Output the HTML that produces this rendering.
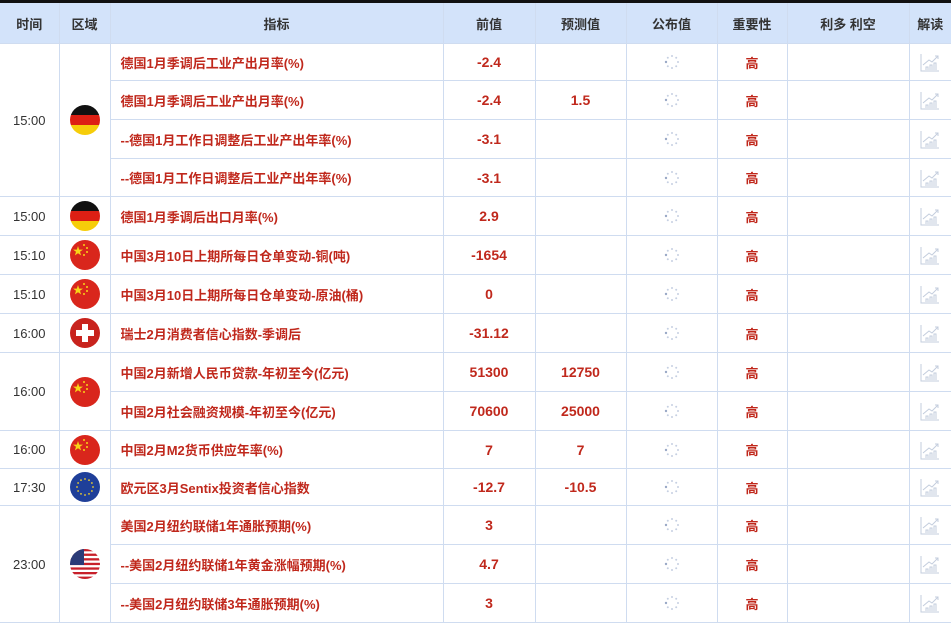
<!DOCTYPE html>
<html><head><meta charset="utf-8"><style>
body{margin:0;width:951px;height:624px;overflow:hidden;background:#fff;font-family:"Liberation Sans","Noto Sans CJK SC",sans-serif;}
.top{height:3px;background:#111;}
table{border-collapse:collapse;table-layout:fixed;width:951px;}
td,th{border:1px solid #cfdcf0;padding:0;text-align:center;font-size:13px;}
th{background:#d3e3fa;color:#333;font-weight:bold;height:40px;}
tr:first-child th{border-top:none}
td.t{color:#333;font-size:13px;}
td.n{color:#c0281c;font-weight:bold;text-align:left;padding-left:10px;}
td.v{color:#c0281c;font-weight:bold;font-size:14px;}
td.h{color:#c0281c;font-weight:bold;}
td:first-child,th:first-child{border-left:none}
td:last-child,th:last-child{border-right:none}
svg{display:block;margin:0 auto;}
</style></head><body>
<div class="top"></div>
<svg width="0" height="0" style="position:absolute">
<defs>
<g id="sp" fill="#c6d0e2"><circle cx="8" cy="2" r="1"/><circle cx="12.2" cy="3.8" r="1"/><circle cx="14" cy="8" r="1"/><circle cx="12.2" cy="12.2" r="1"/><circle cx="8" cy="14" r="1"/><circle cx="3.8" cy="12.2" r="1"/><circle cx="2" cy="8" r="1.2" fill="#9aa9c6"/><circle cx="3.8" cy="3.8" r="1"/></g>
<g id="ch" fill="none" stroke="#c3cddd" stroke-width="1"><path d="M2 3V20H20"/><path d="M4 14L10 9L13 11L19 5M16 5H19V8"/><path d="M7 19V16H9V19M11 19V14H13V19M15 19V12H17V19"/></g>
<clipPath id="cc"><circle cx="15" cy="15" r="15"/></clipPath>
<g id="de" clip-path="url(#cc)"><rect width="30" height="10" fill="#111"/><rect y="10" width="30" height="10" fill="#dd1f14"/><rect y="20" width="30" height="10" fill="#f6cd0a"/></g>
<g id="cn"><circle cx="15" cy="15" r="15" fill="#d9261c"/><polygon points="8,6 9.2,9.6 13,9.6 10,11.8 11.1,15.4 8,13.2 4.9,15.4 6,11.8 3,9.6 6.8,9.6" fill="#f8d517"/><g fill="#f8d517"><circle cx="14" cy="5" r="1"/><circle cx="17" cy="8" r="1"/><circle cx="17" cy="12" r="1"/><circle cx="14" cy="15" r="1"/></g></g>
<g id="ch2"><circle cx="15" cy="15" r="15" fill="#c8231d"/><path d="M12 6H18V12H24V18H18V24H12V18H6V12H12Z" fill="#fff"/></g>
<g id="eu"><circle cx="15" cy="15" r="15" fill="#1f3f99"/><g fill="#f3d12b"><circle cx="15" cy="7" r="0.9"/><circle cx="19" cy="8.1" r="0.9"/><circle cx="21.9" cy="11" r="0.9"/><circle cx="23" cy="15" r="0.9"/><circle cx="21.9" cy="19" r="0.9"/><circle cx="19" cy="21.9" r="0.9"/><circle cx="15" cy="23" r="0.9"/><circle cx="11" cy="21.9" r="0.9"/><circle cx="8.1" cy="19" r="0.9"/><circle cx="7" cy="15" r="0.9"/><circle cx="8.1" cy="11" r="0.9"/><circle cx="11" cy="8.1" r="0.9"/></g></g>
<g id="us" clip-path="url(#cc)"><rect width="30" height="30" fill="#fff"/><g fill="#c8202a"><rect y="0" width="30" height="2.3"/><rect y="4.6" width="30" height="2.3"/><rect y="9.2" width="30" height="2.3"/><rect y="13.8" width="30" height="2.3"/><rect y="18.4" width="30" height="2.3"/><rect y="23" width="30" height="2.3"/><rect y="27.6" width="30" height="2.4"/></g><rect width="14" height="16" fill="#2b3b78"/></g>
</defs></svg>
<table>
<colgroup><col style="width:59px"><col style="width:51px"><col style="width:333px"><col style="width:92px"><col style="width:91px"><col style="width:91px"><col style="width:70px"><col style="width:122px"><col style="width:42px"></colgroup>
<tr><th>时间</th><th>区域</th><th>指标</th><th>前值</th><th>预测值</th><th>公布值</th><th>重要性</th><th>利多 利空</th><th>解读</th></tr>
<tr style="height:37px"><td class="t" rowspan="4">15:00</td><td rowspan="4"><svg width="30" height="30"><use href="#de"/></svg></td><td class="n">德国1月季调后工业产出月率(%)</td><td class="v">-2.4</td><td class="v"></td><td><svg width="16" height="16"><use href="#sp"/></svg></td><td class="h">高</td><td></td><td><svg width="22" height="22"><use href="#ch"/></svg></td></tr>
<tr style="height:39px"><td class="n">德国1月季调后工业产出月率(%)</td><td class="v">-2.4</td><td class="v">1.5</td><td><svg width="16" height="16"><use href="#sp"/></svg></td><td class="h">高</td><td></td><td><svg width="22" height="22"><use href="#ch"/></svg></td></tr>
<tr style="height:39px"><td class="n">--德国1月工作日调整后工业产出年率(%)</td><td class="v">-3.1</td><td class="v"></td><td><svg width="16" height="16"><use href="#sp"/></svg></td><td class="h">高</td><td></td><td><svg width="22" height="22"><use href="#ch"/></svg></td></tr>
<tr style="height:38px"><td class="n">--德国1月工作日调整后工业产出年率(%)</td><td class="v">-3.1</td><td class="v"></td><td><svg width="16" height="16"><use href="#sp"/></svg></td><td class="h">高</td><td></td><td><svg width="22" height="22"><use href="#ch"/></svg></td></tr>
<tr style="height:39px"><td class="t">15:00</td><td><svg width="30" height="30"><use href="#de"/></svg></td><td class="n">德国1月季调后出口月率(%)</td><td class="v">2.9</td><td class="v"></td><td><svg width="16" height="16"><use href="#sp"/></svg></td><td class="h">高</td><td></td><td><svg width="22" height="22"><use href="#ch"/></svg></td></tr>
<tr style="height:39px"><td class="t">15:10</td><td><svg width="30" height="30"><use href="#cn"/></svg></td><td class="n">中国3月10日上期所每日仓单变动-铜(吨)</td><td class="v">-1654</td><td class="v"></td><td><svg width="16" height="16"><use href="#sp"/></svg></td><td class="h">高</td><td></td><td><svg width="22" height="22"><use href="#ch"/></svg></td></tr>
<tr style="height:39px"><td class="t">15:10</td><td><svg width="30" height="30"><use href="#cn"/></svg></td><td class="n">中国3月10日上期所每日仓单变动-原油(桶)</td><td class="v">0</td><td class="v"></td><td><svg width="16" height="16"><use href="#sp"/></svg></td><td class="h">高</td><td></td><td><svg width="22" height="22"><use href="#ch"/></svg></td></tr>
<tr style="height:39px"><td class="t">16:00</td><td><svg width="30" height="30"><use href="#ch2"/></svg></td><td class="n">瑞士2月消费者信心指数-季调后</td><td class="v">-31.12</td><td class="v"></td><td><svg width="16" height="16"><use href="#sp"/></svg></td><td class="h">高</td><td></td><td><svg width="22" height="22"><use href="#ch"/></svg></td></tr>
<tr style="height:39px"><td class="t" rowspan="2">16:00</td><td rowspan="2"><svg width="30" height="30"><use href="#cn"/></svg></td><td class="n">中国2月新增人民币贷款-年初至今(亿元)</td><td class="v">51300</td><td class="v">12750</td><td><svg width="16" height="16"><use href="#sp"/></svg></td><td class="h">高</td><td></td><td><svg width="22" height="22"><use href="#ch"/></svg></td></tr>
<tr style="height:39px"><td class="n">中国2月社会融资规模-年初至今(亿元)</td><td class="v">70600</td><td class="v">25000</td><td><svg width="16" height="16"><use href="#sp"/></svg></td><td class="h">高</td><td></td><td><svg width="22" height="22"><use href="#ch"/></svg></td></tr>
<tr style="height:38px"><td class="t">16:00</td><td><svg width="30" height="30"><use href="#cn"/></svg></td><td class="n">中国2月M2货币供应年率(%)</td><td class="v">7</td><td class="v">7</td><td><svg width="16" height="16"><use href="#sp"/></svg></td><td class="h">高</td><td></td><td><svg width="22" height="22"><use href="#ch"/></svg></td></tr>
<tr style="height:37px"><td class="t">17:30</td><td><svg width="30" height="30"><use href="#eu"/></svg></td><td class="n">欧元区3月Sentix投资者信心指数</td><td class="v">-12.7</td><td class="v">-10.5</td><td><svg width="16" height="16"><use href="#sp"/></svg></td><td class="h">高</td><td></td><td><svg width="22" height="22"><use href="#ch"/></svg></td></tr>
<tr style="height:39px"><td class="t" rowspan="3">23:00</td><td rowspan="3"><svg width="30" height="30"><use href="#us"/></svg></td><td class="n">美国2月纽约联储1年通胀预期(%)</td><td class="v">3</td><td class="v"></td><td><svg width="16" height="16"><use href="#sp"/></svg></td><td class="h">高</td><td></td><td><svg width="22" height="22"><use href="#ch"/></svg></td></tr>
<tr style="height:39px"><td class="n">--美国2月纽约联储1年黄金涨幅预期(%)</td><td class="v">4.7</td><td class="v"></td><td><svg width="16" height="16"><use href="#sp"/></svg></td><td class="h">高</td><td></td><td><svg width="22" height="22"><use href="#ch"/></svg></td></tr>
<tr style="height:39px"><td class="n">--美国2月纽约联储3年通胀预期(%)</td><td class="v">3</td><td class="v"></td><td><svg width="16" height="16"><use href="#sp"/></svg></td><td class="h">高</td><td></td><td><svg width="22" height="22"><use href="#ch"/></svg></td></tr>
</table>
</body></html>
